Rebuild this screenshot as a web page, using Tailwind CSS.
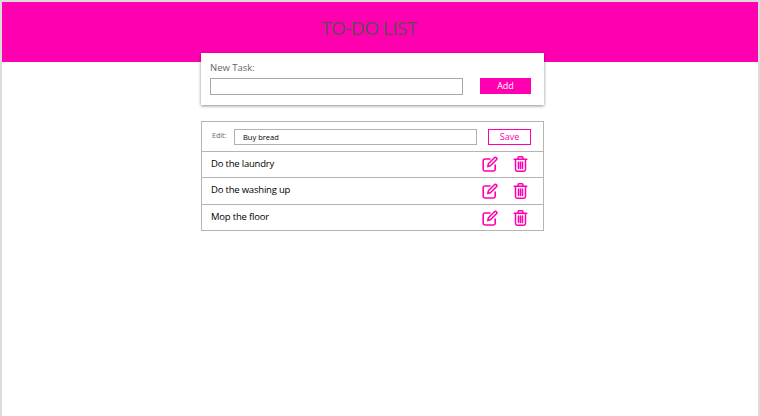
<!DOCTYPE html>
<html lang="en">
<head>
  <meta charset="utf-8"/>
  <title>To-Do List</title>
  <script src="https://cdn.jsdelivr.net/npm/@tailwindcss/browser@4"></script>
</head>
<body class="bg-white font-['Open_Sans',sans-serif]">
  <div class="w-[760px] h-[416px] overflow-hidden border-x-2 border-t-2 border-[#dcdcdc]">
    <header class="h-[60px] bg-[#ff00b0] flex justify-center pt-[13px] pr-[22px]">
      <h1 class="text-[19px] leading-[27px] tracking-[-0.5px] text-[#5f4a5a]">TO-DO LIST</h1>
    </header>

    <section class="relative ml-[199px] -mt-[9px] w-[343px] h-[52px] bg-white shadow-[0_1px_3px_rgba(0,0,0,0.45)] px-[9px] pt-[8px]">
      <label class="block text-[9.5px] leading-[14px] text-[#666666]">New Task:</label>
      <div class="flex mt-[3px]">
        <div class="w-[253px] h-[17px] border border-[#a8a8a8] bg-white"></div>
        <button class="ml-[17px] w-[51px] h-[16px] bg-[#ff00b0] text-white text-[9px] leading-[16px]">Add</button>
      </div>
    </section>

    <ul class="ml-[199px] mt-[16px] w-[343px] border border-[#b4b4b4] text-black">
      <li class="h-[30px] flex items-center pl-[10px] border-b border-[#b4b4b4]">
        <span class="w-[22px] text-[7px] text-[#666666]">Edit:</span>
        <div class="w-[243px] h-[16px] border border-[#b0b0b0] pl-[8px] text-[7.5px] leading-[14px]">Buy bread</div>
        <button class="ml-[11px] w-[43px] h-[16px] border border-[#ff00b0] text-[#ff00b0] text-[9px] leading-[14px]">Save</button>
      </li>
      <li class="h-[26px] flex items-center pl-[9px] pr-[15px] pb-[1px] border-b border-[#b4b4b4] text-[9.5px] tracking-[-0.2px]">
        <span class="flex-1">Do the laundry</span>
        <svg class="w-[16px] h-[16px]" viewBox="0 0 16 16" fill="none" stroke="#ff00b0" stroke-width="1.6" stroke-linejoin="round" stroke-linecap="round"><path d="M8 3H3a1.8 1.8 0 0 0-1.8 1.8v8.4A1.8 1.8 0 0 0 3 15h8.4a1.8 1.8 0 0 0 1.8-1.8V9"/><path d="M5.8 10.6l.6-2.8 6-6a1.3 1.3 0 0 1 2 2l-6 6z"/></svg>
        <svg class="ml-[15px] w-[15px] h-[16px]" viewBox="0 0 14 16" fill="none" stroke="#ff00b0" stroke-width="1.5" stroke-linejoin="round" stroke-linecap="round"><path d="M.7 3.2h12.6M4.6 3V1.6a.8.8 0 0 1 .8-.8h3.2a.8.8 0 0 1 .8.8V3M2 3.2v10.4A1.6 1.6 0 0 0 3.6 15.2h6.8a1.6 1.6 0 0 0 1.6-1.6V3.2M5 6v6.5M7 6v6.5M9 6v6.5"/></svg>
      </li>
      <li class="h-[27px] flex items-center pl-[9px] pr-[15px] pb-[1px] border-b border-[#b4b4b4] text-[9.5px] tracking-[-0.2px]">
        <span class="flex-1">Do the washing up</span>
        <svg class="w-[16px] h-[16px]" viewBox="0 0 16 16" fill="none" stroke="#ff00b0" stroke-width="1.6" stroke-linejoin="round" stroke-linecap="round"><path d="M8 3H3a1.8 1.8 0 0 0-1.8 1.8v8.4A1.8 1.8 0 0 0 3 15h8.4a1.8 1.8 0 0 0 1.8-1.8V9"/><path d="M5.8 10.6l.6-2.8 6-6a1.3 1.3 0 0 1 2 2l-6 6z"/></svg>
        <svg class="ml-[15px] w-[15px] h-[16px]" viewBox="0 0 14 16" fill="none" stroke="#ff00b0" stroke-width="1.5" stroke-linejoin="round" stroke-linecap="round"><path d="M.7 3.2h12.6M4.6 3V1.6a.8.8 0 0 1 .8-.8h3.2a.8.8 0 0 1 .8.8V3M2 3.2v10.4A1.6 1.6 0 0 0 3.6 15.2h6.8a1.6 1.6 0 0 0 1.6-1.6V3.2M5 6v6.5M7 6v6.5M9 6v6.5"/></svg>
      </li>
      <li class="h-[25px] flex items-center pl-[9px] pr-[15px] text-[9.5px] tracking-[-0.2px]">
        <span class="flex-1">Mop the floor</span>
        <svg class="w-[16px] h-[16px]" viewBox="0 0 16 16" fill="none" stroke="#ff00b0" stroke-width="1.6" stroke-linejoin="round" stroke-linecap="round"><path d="M8 3H3a1.8 1.8 0 0 0-1.8 1.8v8.4A1.8 1.8 0 0 0 3 15h8.4a1.8 1.8 0 0 0 1.8-1.8V9"/><path d="M5.8 10.6l.6-2.8 6-6a1.3 1.3 0 0 1 2 2l-6 6z"/></svg>
        <svg class="ml-[15px] w-[15px] h-[16px]" viewBox="0 0 14 16" fill="none" stroke="#ff00b0" stroke-width="1.5" stroke-linejoin="round" stroke-linecap="round"><path d="M.7 3.2h12.6M4.6 3V1.6a.8.8 0 0 1 .8-.8h3.2a.8.8 0 0 1 .8.8V3M2 3.2v10.4A1.6 1.6 0 0 0 3.6 15.2h6.8a1.6 1.6 0 0 0 1.6-1.6V3.2M5 6v6.5M7 6v6.5M9 6v6.5"/></svg>
      </li>
    </ul>
  </div>
</body>
</html>
